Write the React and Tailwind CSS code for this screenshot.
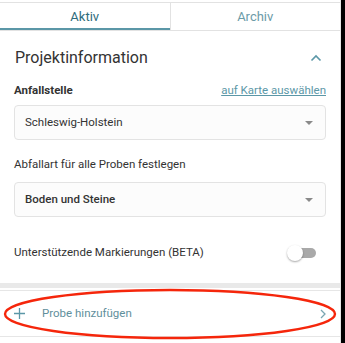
import { useState } from 'react';

const TABS = ['Aktiv', 'Archiv'];

function Caret() {
  return (
    <svg width="8" height="4" viewBox="0 0 8 4" className="shrink-0">
      <path d="M0 0 L8 0 L4 4 Z" fill="#8a8a8a" />
    </svg>
  );
}

function SelectBox({ value, bold }) {
  return (
    <div className="flex items-center justify-between h-[35px] pl-[10px] pr-[12px] rounded-[4px] border border-[#e3e3e3] bg-[#fcfcfc]">
      <span className={`text-[11.5px] text-[#333] ${bold ? 'font-medium' : ''}`}>{value}</span>
      <Caret />
    </div>
  );
}

export default function App() {
  const [active, setActive] = useState('Aktiv');
  const [beta, setBeta] = useState(false);

  return (
    <div className="relative w-[345px] h-[343px] bg-white overflow-hidden flex" style={{ fontFamily: 'Roboto, "Liberation Sans", sans-serif' }}>
      <div className="w-[341px] border-r border-[#e6e6e6] flex flex-col">
        <div className="mt-[2px] flex border-t border-b border-[#e2e2e2]">
          {TABS.map((tab) => (
            <button
              key={tab}
              onClick={() => setActive(tab)}
              className={`flex-1 h-[27px] text-[13px] ${
                tab === 'Aktiv' ? 'border-r border-[#e2e2e2]' : ''
              } ${
                active === tab
                  ? 'text-[#2f6b7c] shadow-[inset_0_-2px_0_#5b97a7]'
                  : 'text-[#6c9ba8]'
              }`}
            >
              {tab}
            </button>
          ))}
        </div>

        {/* Projektinformation */}
        <div className="px-[14px] pt-[15px]">
          <div className="flex items-center justify-between">
            <h2 className="text-[16px] text-[#333] leading-[24px] pl-[1px]">Projektinformation</h2>
            <svg width="12" height="8" viewBox="0 0 12 8" className="mr-[4px]">
              <path d="M1.5 6.5 L6 2 L10.5 6.5" fill="none" stroke="#5b97a7" strokeWidth="1.6" />
            </svg>
          </div>

          <div className="flex items-center justify-between mt-[12px] leading-[16px]">
            <span className="text-[11.5px] font-bold text-[#333]">Anfallstelle</span>
            <a className="text-[11.5px] text-[#5b97a7] underline">auf Karte auswählen</a>
          </div>
          <div className="mt-[7px]">
            <SelectBox value="Schleswig-Holstein" />
          </div>

          <div className="mt-[16px] text-[11.5px] leading-[16px] text-[#333]">Abfallart für alle Proben festlegen</div>
          <div className="mt-[10px]">
            <SelectBox value="Boden und Steine" bold />
          </div>

          <div className="flex items-center justify-between mt-[27px] h-[18px]">
            <span className="text-[11.5px] text-[#333]">Unterstützende Markierungen (BETA)</span>
            <button onClick={() => setBeta(!beta)} className="relative w-[29px] h-[16px] mr-[10px]">
              <span className="absolute right-0 top-[3px] w-[22px] h-[10px] rounded-full bg-[#a9a9a9]" />
              <span className="absolute left-0 top-0 w-[16px] h-[16px] rounded-full bg-white shadow-[0_1px_2px_rgba(0,0,0,0.35)]" />
            </button>
          </div>
        </div>

        <div className="mt-[21px] h-[5px] bg-[#e9e9e9]" />
        <div className="mt-[2px] flex items-center h-[47px] border-t border-b border-[#e6e6e6] pl-[14px] pr-[14px]">
          <svg width="11" height="11" viewBox="0 0 11 11">
            <path d="M5.5 0 V11 M0 5.5 H11" stroke="#5b97a7" strokeWidth="1.3" />
          </svg>
          <span className="ml-[17px] text-[11.5px] text-[#5f8f9c] flex-1">Probe hinzufügen</span>
          <svg width="6" height="10" viewBox="0 0 6 10">
            <path d="M1 1 L5 5 L1 9" fill="none" stroke="#7aa6b2" strokeWidth="1.3" />
          </svg>
        </div>
      </div>
      <div className="flex-1 bg-black" />

      <svg className="absolute left-0 top-0 pointer-events-none" width="345" height="343">
        <ellipse cx="170" cy="314" rx="165" ry="24" fill="none" stroke="#f5260b" strokeWidth="2.4" />
      </svg>
    </div>
  );
}
